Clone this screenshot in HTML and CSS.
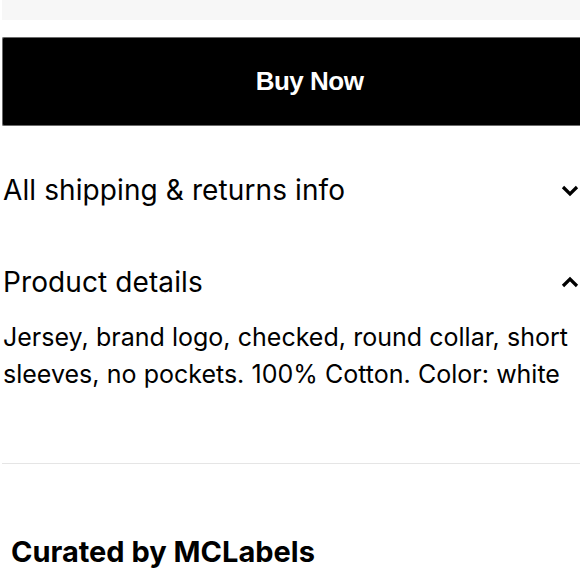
FILE: index.html
```
<!DOCTYPE html>
<html>
<head>
<meta charset="utf-8">
<link rel="stylesheet" href="styles.css">
</head>
<body>
<div class="page">
  <div class="topbox"></div>
  <button class="buy">Buy Now</button>
  <div class="acc-row">
    <span class="acc-title">All shipping &amp; returns info</span>
    <svg class="chev" width="20" height="14" viewBox="0 0 20 14"><path d="M3 4 L10 11 L17 4" fill="none" stroke="#000" stroke-width="3.2"/></svg>
  </div>
  <div class="acc-row open">
    <span class="acc-title">Product details</span>
    <svg class="chev" width="20" height="14" viewBox="0 0 20 14"><path d="M3 11 L10 4 L17 11" fill="none" stroke="#000" stroke-width="3.2"/></svg>
  </div>
  <p class="details">Jersey, brand logo, checked, round collar, short sleeves, no pockets. 100% Cotton. Color: white</p>
  <hr class="divider">
  <h2 class="curated">Curated by MCLabels</h2>
</div>
</body>
</html>
```
FILE: styles.css
```
html, body { margin: 0; padding: 0; background: #fff; overflow: hidden; }
body { font-family: Inter, "Noto Sans", sans-serif; color: #000; }
.page { padding-left: 2px; width: 578px; }
.topbox { height: 20px; background: #f7f7f7; }
.buy {
  display: block; box-sizing: border-box; margin-top: 17px; width: 578px; height: 89px;
  background: #000; color: #fff; border: 1px solid #6b6b6b; border-right: 0; border-radius: 2px 0 0 2px;
  font-family: "Liberation Sans", Arial, sans-serif; font-weight: bold; font-size: 26px;
  padding: 0 0 0 36px; letter-spacing: -0.5px;
}
.acc-row { display: flex; justify-content: space-between; align-items: center; width: 578px; height: 40px; margin-top: 44px; }
.acc-row.open { margin-top: 52px; }
.acc-title { font-size: 28px; letter-spacing: 0.1px; padding-left: 1px; }
.details { font-size: 25px; line-height: 37px; margin: 17px 0 0 1px; width: 577px; word-spacing: 0.2px; }
.divider { border: 0; border-top: 1px solid #e5e5e5; margin: 70px 0 0 0; width: 578px; }
.curated { font-size: 29px; font-weight: 700; margin: 70px 0 0 9px; letter-spacing: 0; }
```
